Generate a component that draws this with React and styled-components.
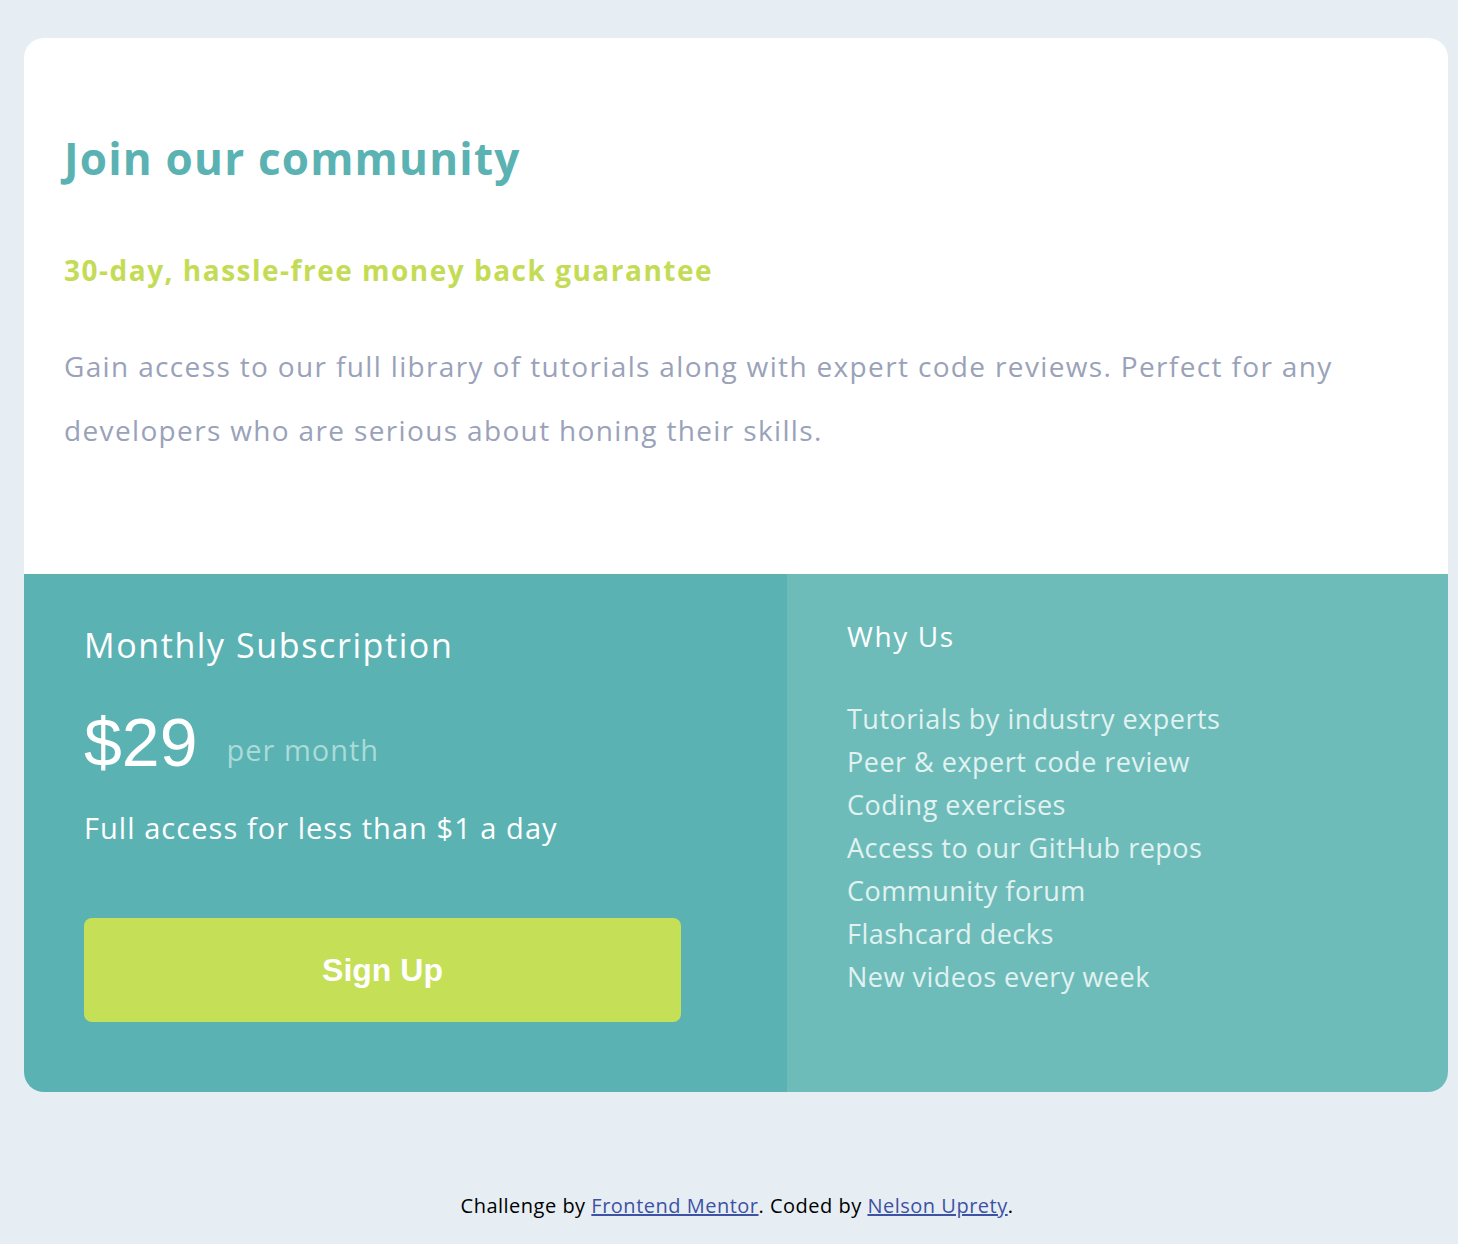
import React from "react";
import styled, { createGlobalStyle } from "styled-components";

const GlobalStyle = createGlobalStyle`
  body {
    margin: 0;
    background-color: #e6eef4;
    font-family: "Open Sans", Lato, sans-serif;
  }
`;

const FEATURES = [
  "Tutorials by industry experts",
  "Peer & expert code review",
  "Coding exercises",
  "Access to our GitHub repos",
  "Community forum",
  "Flashcard decks",
  "New videos every week",
];

function App() {
  return (
    <>
      <GlobalStyle />
      <Page>
        <Card>
          <Top>
            <Title>Join our community</Title>
            <Guarantee>30-day, hassle-free money back guarantee</Guarantee>
            <Intro>
              Gain access to our full library of tutorials along with expert code reviews. Perfect for any
              <br />
              developers who are serious about honing their skills.
            </Intro>
          </Top>
          <Bottom>
            <Subscription>
              <PlanName>Monthly Subscription</PlanName>
              <PriceRow>
                <Price>$29</Price>
                <Period>per month</Period>
              </PriceRow>
              <Access>Full access for less than $1 a day</Access>
              <SignUp>Sign Up</SignUp>
            </Subscription>
            <WhyUs>
              <WhyTitle>Why Us</WhyTitle>
              <List>
                {FEATURES.map(item => (
                  <Item key={item}>{item}</Item>
                ))}
              </List>
            </WhyUs>
          </Bottom>
        </Card>
        <Footer>
          Challenge by <Link href="#">Frontend Mentor</Link>. Coded by <Link href="#">Nelson Uprety</Link>.
        </Footer>
      </Page>
    </>
  );
}

const Page = styled.div`
  min-height: 1244px;
  padding-top: 38px;
  box-sizing: border-box;
`;

const Card = styled.div`
  margin: 0 10px 0 24px;
  border-radius: 20px;
  overflow: hidden;
  background-color: #fff;
`;

const Top = styled.div`
  padding: 90px 40px 112px;
`;

const Title = styled.h1`
  margin: 0;
  font-size: 44px;
  line-height: 60px;
  font-weight: 700;
  letter-spacing: 1.2px;
  color: #5ab2b2;
`;

const Guarantee = styled.h2`
  margin: 62px 0 0;
  font-size: 28px;
  line-height: 40px;
  font-weight: 700;
  letter-spacing: 1.5px;
  color: #c4dc55;
`;

const Intro = styled.p`
  margin: 44px 0 0;
  font-size: 28px;
  line-height: 64px;
  letter-spacing: 1.35px;
  color: #9aa2ba;
`;

const Bottom = styled.div`
  display: flex;
`;

const Subscription = styled.div`
  width: 763px;
  padding: 49px 0 70px 60px;
  box-sizing: border-box;
  background-color: #5bb2b3;
`;

const PlanName = styled.h3`
  margin: 0;
  font-size: 34px;
  line-height: 44px;
  font-weight: 400;
  letter-spacing: 1.6px;
  color: #fff;
`;

const PriceRow = styled.div`
  margin-top: 40px;
  height: 70px;
  line-height: 70px;
  white-space: nowrap;
`;

const Price = styled.span`
  font-family: "Liberation Sans", Arial, sans-serif;
  font-size: 68px;
  color: #fff;
`;

const Period = styled.span`
  margin-left: 29px;
  vertical-align: 5px;
  font-size: 29px;
  letter-spacing: 1px;
  color: #a9dbd8;
`;

const Access = styled.p`
  margin: 31px 0 0;
  font-size: 29px;
  line-height: 40px;
  letter-spacing: 1.05px;
  color: #fff;
`;

const SignUp = styled.button`
  display: block;
  width: 597px;
  height: 104px;
  margin-top: 70px;
  border: none;
  border-radius: 8px;
  background-color: #c5df57;
  font-family: "Liberation Sans", Arial, sans-serif;
  font-size: 32px;
  font-weight: 700;
  color: #fff;
  cursor: pointer;
`;

const WhyUs = styled.div`
  flex: 1;
  padding: 42px 0 0 60px;
  background-color: #6dbcba;
`;

const WhyTitle = styled.h3`
  margin: 0;
  font-size: 28px;
  line-height: 40px;
  font-weight: 400;
  letter-spacing: 1.6px;
  color: #fff;
`;

const List = styled.ul`
  margin: 41px 0 0;
  padding: 0;
  list-style: none;
`;

const Item = styled.li`
  font-size: 27px;
  line-height: 43px;
  letter-spacing: 0.5px;
  color: #e1f2f0;
`;

const Footer = styled.p`
  margin: 99px 0 0;
  padding-left: 16px;
  text-align: center;
  font-size: 20px;
  line-height: 30px;
  letter-spacing: 0.5px;
  color: #000;
`;

const Link = styled.a`
  color: #3e52a3;
`;

export default App;
